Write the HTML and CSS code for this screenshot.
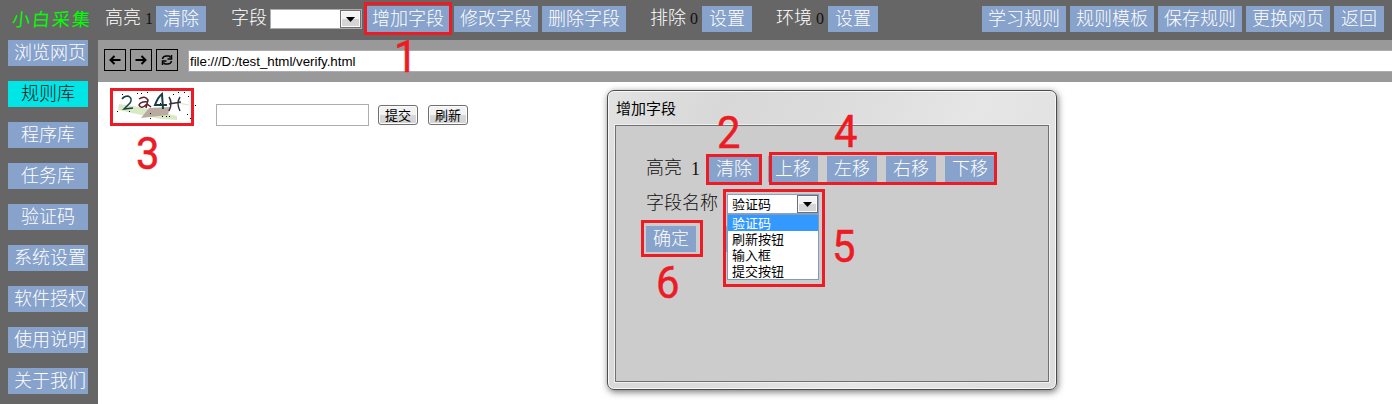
FILE: index.html
```html
<!DOCTYPE html>
<html lang="zh-CN">
<head>
<meta charset="utf-8">
<title>小白采集</title>
<link rel="stylesheet" href="styles.css">
</head>
<body>
<div class="app">
  <header class="topbar">
    <div class="logo">小白采集</div>
    <div class="group g-highlight"><span>高亮</span><span class="count">1</span><button class="btn">清除</button></div>
    <div class="group g-field"><span>字段</span><div class="select"><span></span><i class="drop"><svg width="9" height="5"><path d="M0 0H9L4.5 5Z"/></svg></i></div><button class="btn">增加字段</button><button class="btn">修改字段</button><button class="btn">删除字段</button></div>
    <div class="group"><span>排除</span><span class="count">0</span><button class="btn">设置</button></div>
    <div class="group"><span>环境</span><span class="count">0</span><button class="btn">设置</button></div>
    <nav class="actions"><button class="btn">学习规则</button><button class="btn">规则模板</button><button class="btn">保存规则</button><button class="btn">更换网页</button><button class="btn">返回</button></nav>
  </header>
  <div class="body">
    <aside class="sidebar">
      <button class="btn">浏览网页</button>
      <button class="btn active">规则库</button>
      <button class="btn">程序库</button>
      <button class="btn">任务库</button>
      <button class="btn">验证码</button>
      <button class="btn">系统设置</button>
      <button class="btn">软件授权</button>
      <button class="btn">使用说明</button>
      <button class="btn">关于我们</button>
    </aside>
    <main class="browser">
      <div class="address-bar">
        <button class="nav"><svg width="20" height="20"><path d="M15.5 10H6M9.5 6L5.5 10L9.5 14"/></svg></button>
        <button class="nav"><svg width="20" height="20"><path d="M4.500 10H14M10.500 6L14.500 10L10.500 14"/></svg></button>
        <button class="nav"><svg class="thin" width="20" height="20"><path d="M5.500 9Q6 6 9.500 6H12L13.500 7.500M14.500 5V9H10.500M14.500 11Q14 14 10.500 14H8L6.500 12.500M5.500 15V11H9.500"/></svg></button>
        <div class="url">file:///D:/test_html/verify.html</div>
      </div>
      <div class="page">
        <svg class="captcha" width="90" height="34" viewBox="0 0 90 34">
          <path fill="#d9e9c3" d="M6 13L26 16L64 25V29L48 28L5 19Z"/>
          <path fill="#b9aba0" d="M36 17L57 16L55 24L28 27Z"/>
          <path fill="none" stroke="#d9e9c3" d="M65 12L76 14"/>
          <g fill="none" stroke-width="1.500">
            <path stroke="#193f42" d="M9 8Q11 5 15 5Q20 7 17 12L11 18L20 17"/>
            <path stroke="#5d2029" d="M26 8Q32 4 35 9L33 17M35 11Q28 10 26 14Q28 19 34 13L38 16"/>
            <path stroke="#173f43" stroke-width="2" d="M50 18L49 3Q45 6 42 14L54 14"/>
            <path stroke="#36313c" d="M56 6Q60 12 56 20M67 6Q63 12 67 20M56 13L68 11"/>
          </g>
          <path fill="#000" d="M28 2h1v1h-1zM9 3h1v1h-1zM34 1h1v1h-1zM65 1h1v1h-1zM71 1h1v1h-1zM75 5h1v1h-1zM82 14h1v1h-1zM74 23h1v1h-1zM77 27h1v1h-1zM4 20h1v1h-1zM37 22h1v1h-1zM37 27h1v1h-1zM49 25h1v1h-1zM53 25h1v1h-1zM56 25h1v1h-1zM24 2h1v1h-1zM60 3h1v1h-1zM47 12h1v1h-1zM16 20h1v1h-1z"/>
        </svg>
        <div class="code-input"></div>
        <button class="native">提交</button>
        <button class="native">刷新</button>
      </div>
    </main>
  </div>

  <section class="dialog">
    <h1 class="dialog-title">增加字段</h1>
    <div class="dialog-body">
      <div class="row"><span>高亮</span><span class="row-count">1</span><button class="btn">清除</button><button class="btn">上移</button><button class="btn">左移</button><button class="btn">右移</button><button class="btn">下移</button></div>
      <div class="row row-name"><span>字段名称</span>
        <div class="combo">
          <div class="select"><span>验证码</span><i class="drop"><svg width="9" height="5"><path d="M0 0H9L4.500 5Z"/></svg></i></div>
          <ul class="options"><li class="selected">验证码</li><li>刷新按钮</li><li>输入框</li><li>提交按钮</li></ul>
        </div>
      </div>
      <div class="row row-ok"><button class="btn">确定</button><button class="btn cancel"></button></div>
    </div>
  </section>

  <div class="mark m1"></div><div class="num n1">1</div>
  <div class="mark m2"></div><div class="num n2">2</div>
  <div class="mark m3"></div><div class="num n3">3</div>
  <div class="mark m4"></div><div class="num n4">4</div>
  <div class="mark m5"></div><div class="num n5">5</div>
  <div class="mark m6"></div><div class="num n6">6</div>
</div>
</body>
</html>
```
FILE: styles.css
```css
* { box-sizing: border-box; }
body { margin: 0; background: #fff; font-family: "Liberation Serif", "Noto Sans CJK SC", serif; font-weight: 300; }
button { font: inherit; padding: 0; border: 0; }
.app { position: relative; width: 1392px; height: 404px; overflow: hidden; font-size: 18px; line-height: 26px; }

.btn { height: 26px; background: #87a2cb; color: #fff; font-size: 18px; line-height: 25px; white-space: nowrap; flex: none; width: 50px; text-align: center; }
.topbar { display: flex; align-items: center; height: 40px; padding: 0 8px 2px 12px; background: #666; color: #fff; }
.topbar .btn { width: auto; min-width: 50px; padding: 0 6px; }
.logo { width: 93px; color: #0f0; font-family: "Noto Sans CJK SC", sans-serif; font-weight: 400; font-size: 18px; line-height: 20px; padding-bottom: 2px; letter-spacing: 2px; transform: skewX(-5deg); white-space: nowrap; }
.group { display: flex; align-items: center; gap: 4px; margin-right: 24px; white-space: nowrap; }
.group > span { line-height: 24px; padding-bottom: 2px; }
.group .count { width: 8px; color: #111; font-size: 16px; padding: 0; }
.g-highlight { margin-right: 25px; }
.g-highlight .count { margin-right: -1px; }
.g-field .select { margin-left: -1px; }
.actions { display: flex; gap: 4px; margin-left: auto; }

.select { display: flex; justify-content: space-between; width: 92px; height: 20px; padding: 0; border: 1px solid #abadb3; background: #fff; color: #000; font: 13px/18px "Noto Sans CJK SC", sans-serif; }
.select > span { padding-left: 4px; }
.drop { display: flex; align-items: center; justify-content: center; width: 21px; height: 18px; border: 1px solid #707070; background: linear-gradient(#f3f3f3 50%, #d5d5d5 50%); box-shadow: inset 0 0 0 1px #fbfbfb; }

.body { display: flex; height: 364px; }
.sidebar { display: flex; flex-direction: column; gap: 15px; width: 98px; padding-left: 8px; background: #666; }
.sidebar .btn { width: 80px; padding: 0 2px 0 6px; }
.sidebar .active { background: #00e5e5; color: #111; }
.sidebar .active, .sidebar .btn:nth-child(n+2):nth-child(-n+5) { padding: 0; }
.browser { flex: 1; }
.address-bar { display: flex; align-items: flex-start; gap: 4px; height: 42px; padding: 9px 0 0 6px; background: #999; }
.nav { width: 22px; height: 22px; border: 1px solid #000; background: transparent; }
.nav svg { display: block; fill: none; stroke: #000; stroke-width: 2; }
.nav .thin { stroke-width: 1.5; }
.url { flex: 1; height: 22px; margin: 1px 0 0 6px; padding-left: 1px; border: 1px solid #abadb3; border-right: 0; background: #fff; color: #000; font: 13.33px/21px "Liberation Sans", Arial, sans-serif; letter-spacing: -.03px; }
.page { display: flex; align-items: flex-start; padding: 9px 0 0 15px; }
.captcha { flex: none; margin-right: 13px; }
.code-input { width: 153px; height: 22px; margin: 13px 9px 0 0; border: 1px solid #abadb3; }
.native { width: 40px; height: 20px; margin: 14px 10px 0 0; border: 1px solid #707070; border-radius: 3px; background: linear-gradient(#f2f2f2 50%, #d8d8d8 50%, #d2d2d2); box-shadow: inset 0 0 0 1px #fcfcfc; color: #000; font: 400 13px/18px "Noto Sans CJK SC", sans-serif; }

.dialog { position: absolute; left: 607px; top: 90px; width: 450px; height: 300px; padding: 0 7px; border: 1px solid #4c4c4c; border-radius: 7px; background: linear-gradient(115deg, #e2e2e2, #d8d8d8 20%, #dcdcdc 40%, #e6e6e6 65%, #dcdcdc); box-shadow: inset 0 0 0 1px #f8f8f8, 1px 2px 7px rgba(0,0,0,.55); }
.dialog-title { height: 34px; margin: 0; padding-left: 1px; color: #000; font: 400 15px/34px "Noto Sans CJK SC", sans-serif; }
.dialog-body { height: 257px; padding: 30px 0 0 30px; border: 1px solid #707070; background: #ccc; box-shadow: 0 0 0 1px #f0f0f0; color: #111; }
.row { display: flex; align-items: center; height: 26px; gap: 9px; }
.row > span { padding-bottom: 2px; padding-right: 1px; white-space: nowrap; }
.row .row-count { width: 10px; margin-left: -1px; margin-right: -1px; padding: 0; }
.row-name { margin-top: 9px; }
.combo { position: relative; margin-left: -1px; }
.combo .select { border-color: #87a2cb; }
.options { position: absolute; z-index: 1; left: 0; top: 20px; width: 92px; margin: 0; padding: 0; border: 1px solid #7f9db9; background: #fff; color: #000; font: 400 13px/16px "Noto Sans CJK SC", sans-serif; list-style: none; }
.options li { height: 16px; padding-left: 4px; }
.options .selected { background: #39f; color: #fff; }
.row-ok { gap: 30px; margin-top: 9px; }

.mark { position: absolute; border: 3px solid #ed1c24; }
.m1 { left: 364px; top: 2px; width: 88px; height: 33px; }
.m2 { left: 706px; top: 154px; width: 56px; height: 31px; }
.m3 { left: 110px; top: 88px; width: 84px; height: 38px; }
.m4 { left: 769px; top: 152px; width: 228px; height: 33px; }
.m5 { left: 723px; top: 189px; width: 102px; height: 98px; }
.m6 { left: 641px; top: 220px; width: 62px; height: 37px; }
.num { position: absolute; color: #ed1c24; font: 400 45px/44px Roboto, sans-serif; -webkit-text-stroke: .5px #ed1c24; transform: scaleX(.93); }
.n1 { left: 393px; top: 35px; }
.n2 { left: 716px; top: 111px; }
.n3 { left: 135px; top: 132px; }
.n4 { left: 833px; top: 110px; }
.n5 { left: 831px; top: 225px; }
.n6 { left: 655px; top: 261px; }
```
